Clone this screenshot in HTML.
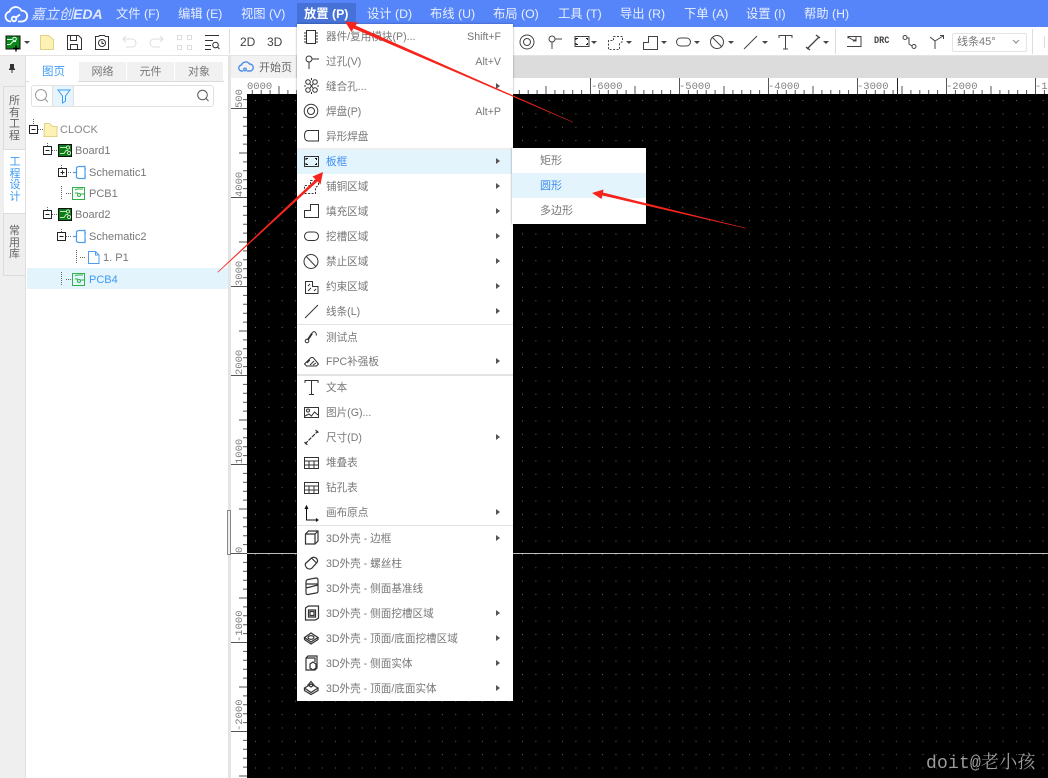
<!DOCTYPE html>
<html lang="zh">
<head>
<meta charset="utf-8">
<title>嘉立创EDA</title>
<style>
html,body{margin:0;padding:0;background:#fff}
#app{position:relative;width:1048px;height:778px;overflow:hidden;background:#fff;font-family:"Liberation Sans","Noto Sans CJK SC",sans-serif;font-size:11px;color:#777}
#app div,#app span,#app svg{position:absolute}
.mb{top:0;height:27px;line-height:28px;font-size:12.3px;color:#e9efff;white-space:nowrap}
.t{white-space:nowrap}
.r{left:297px;width:216px;height:25px;line-height:27px;white-space:nowrap;color:#777;font-size:10.6px}
.r b{position:absolute;left:29px;font-weight:normal}
.r em{position:absolute;right:12px;font-style:normal}
.r.s:after{content:"";position:absolute;left:199px;top:9px;border-left:4px solid #555;border-top:3.5px solid transparent;border-bottom:3.5px solid transparent}
.sep{left:297px;width:216px;height:1px;background:#e3e3e3}
.tab{top:62px;height:19px;line-height:21px;text-align:center;background:#f1f1f1;color:#777;box-sizing:border-box;font-size:11px}
.rail{left:3px;width:22px;text-align:center;box-sizing:border-box;line-height:11.5px;font-size:11px;color:#666}
.tr{height:21px;line-height:23px;white-space:nowrap;color:#777}
</style>
</head>
<body>
<div id="app">
<!-- top bar -->
<div style="left:0;top:0;width:1048px;height:27px;background:#5585f8"></div>
<div style="left:297px;top:3px;width:59px;height:21px;background:#4672d8"></div>
<svg style="left:0;top:0" width="30" height="27" viewBox="0 0 30 27" fill="none" stroke="#fff" stroke-width="1.8"><path d="M11 21.5H10.500A5 5 0 0 1 9.500 11.600A6.500 6.500 0 0 1 21.500 10.600A5.400 5.400 0 0 1 22 21.500H18"/><circle cx="14" cy="19" r="2.300"/><path d="M16 17.500L20 14.500"/></svg>
<div class="t" style="left:31px;top:0;height:27px;line-height:28px;font-size:14px;font-style:italic;color:#dfe8ff">嘉立创<span style="position:static;font-weight:bold">EDA</span></div>
<div class="mb" style="left:116px">文件 (F)</div>
<div class="mb" style="left:178px">编辑 (E)</div>
<div class="mb" style="left:241px">视图 (V)</div>
<div class="mb" style="left:304px;font-weight:bold;color:#fff">放置 (P)</div>
<div class="mb" style="left:367px">设计 (D)</div>
<div class="mb" style="left:430px">布线 (U)</div>
<div class="mb" style="left:493px">布局 (O)</div>
<div class="mb" style="left:558px">工具 (T)</div>
<div class="mb" style="left:620px">导出 (R)</div>
<div class="mb" style="left:684px">下单 (A)</div>
<div class="mb" style="left:746px">设置 (I)</div>
<div class="mb" style="left:804px">帮助 (H)</div>

<!-- toolbar -->
<div style="left:0;top:27px;width:1048px;height:29px;background:#fff;border-bottom:1px solid #e4e4e4;box-sizing:border-box"></div>
<div style="left:0;top:56px;width:1048px;height:22px;background:#dcdcdc"></div>
<div style="left:229px;top:29px;width:1px;height:25px;background:#ddd"></div>
<div style="left:835px;top:29px;width:1px;height:25px;background:#ddd"></div>
<div style="left:1032px;top:29px;width:1px;height:25px;background:#ddd"></div>
<div class="t" style="left:240px;top:34px;font-size:12px;color:#444;line-height:16px">2D</div>
<div class="t" style="left:267px;top:34px;font-size:12px;color:#444;line-height:16px">3D</div>
<div class="t" style="left:874px;top:35px;font:bold 10px/14px 'Liberation Mono',monospace;color:#444;transform:scaleX(.85);transform-origin:left">DRC</div>
<div style="left:952px;top:33px;width:75px;height:19px;border:1px solid #e4e4e4;box-sizing:border-box;border-radius:2px;line-height:17px;padding-left:4px;font-size:11px;color:#777;white-space:nowrap">
<span style="position:static">线条45°</span></div>
<svg style="left:0;top:27px" width="1048" height="29" viewBox="0 27 1048 29" fill="none" stroke="#444" stroke-width="1">
<rect x="6" y="36" width="14" height="13" fill="#0b8a1a" stroke="#111"/>
<path d="M7 39.500h5M7 44.500h3l3-3h3" stroke="#dfe" stroke-width="1"/><circle cx="14.500" cy="39" r="1.800" stroke="#dfe"/>
<path d="M13 48.500h6M16 45.500v6" stroke="#000" stroke-width="1.400"/>
<path d="M24 41h6l-3 3z" fill="#444" stroke="none"/>
<path d="M40.500 35.500h8l5 4v10h-13z" fill="#fdf1b4" stroke="#e2d288"/>
<path d="M67.500 35.500h11l3 3v11h-14zM70.500 35.500v5h6v-5M70.500 49.500v-5h7v5" stroke="#333"/>
<path d="M95.500 36.500h3l1-1h5l1 1h3v13h-13z" stroke="#333"/><circle cx="102" cy="43" r="3.500" stroke="#333"/><path d="M102 41v2.500h2" stroke="#333"/>
<path d="M126 36l-3 3 3 3M123 39h9a3.800 3.800 0 0 1 0 8h-6" stroke="#ddd"/>
<path d="M160 36l3 3-3 3M163 39h-9a3.800 3.800 0 0 0 0 8h6" stroke="#ddd"/>
<path d="M177.500 35.500h4v4h-4zM187.500 35.500h4v4h-4zM177.500 45.500h4v4h-4zM187.500 45.500h4v4h-4z" stroke="#ddd"/>
<path d="M205 35.500h14M205 40.500h8M205 45.500h6M205 49.500h6" stroke="#333"/><circle cx="215.500" cy="45" r="2.800" stroke="#333"/><path d="M217.500 47l2 2" stroke="#333"/>
<circle cx="527" cy="42" r="7"/><circle cx="527" cy="42" r="3.500"/>
<circle cx="552" cy="39" r="3"/><path d="M555 39h7M552 42v7"/>
<rect x="575" y="36.500" width="14" height="10"/><path d="M576 38.500h2M576 38v2M586 38.500h2M587.500 38v2M576 44.500h2M576 43v2M586 44.500h2M587.500 43v2" stroke="#222"/>
<path d="M591 41h6l-3 3z" fill="#444" stroke="none"/>
<path d="M613.500 36.500h9v5l-3 2v6h-11v-9h5z" stroke-dasharray="2 1.500"/><path d="M626 41h6l-3 3z" fill="#444" stroke="none"/>
<path d="M643.500 49.500v-7h5v-6h9v13z"/><path d="M661 41h6l-3 3z" fill="#444" stroke="none"/>
<rect x="676.500" y="38" width="14" height="8" rx="4"/><path d="M694 41h6l-3 3z" fill="#444" stroke="none"/>
<circle cx="717" cy="42" r="6.500"/><path d="M712.500 37.500l9 9"/><path d="M728 41h6l-3 3z" fill="#444" stroke="none"/>
<path d="M744 49l13-13"/><path d="M762 41h6l-3 3z" fill="#444" stroke="none"/>
<path d="M779 38v-2.500h13v2.500M785.500 35.500v13.500M783 49h5"/>
<path d="M807 49l12-12M806 47l4 3M816 35l4 3" stroke-width="1.300"/><path d="M823 41h6l-3 3z" fill="#444" stroke="none"/>
<path d="M848 38.500v-2h13v10h-14M848 37l5 3h3M856 37v4h-3"/>
<circle cx="905" cy="37.500" r="2"/><circle cx="914" cy="46.500" r="2"/><path d="M907 38h2v6l3 2"/>
<path d="M930 37l5 4v8M935 41l8-5M940 35.500h3.500v3.500"/>
<path d="M1013 40l3 3 3-3" stroke="#888"/>
<path d="M1044.500 36v12" stroke="#ddd"/>
</svg>

<!-- canvas + rulers -->
<svg style="left:231px;top:56px" width="817" height="722" viewBox="231 56 817 722">
<defs>
<pattern id="hr" patternUnits="userSpaceOnUse" x="234" y="78" width="89" height="16">
<path d="M.5 0v16M9.400 12v4M18.300 12v4M27.200 12v4M36.100 12v4M45 8v8M53.900 12v4M62.800 12v4M71.700 12v4M80.600 12v4" stroke="#555" fill="none"/>
</pattern>
<pattern id="vr" patternUnits="userSpaceOnUse" x="231" y="108" width="16" height="89">
<path d="M0 .5h16M12 9.400h4M12 18.300h4M12 27.200h4M12 36.100h4M8 45h8M12 53.900h4M12 62.800h4M12 71.700h4M12 80.600h4" stroke="#555" fill="none"/>
</pattern>
<pattern id="dots" patternUnits="userSpaceOnUse" x="255" y="100" width="13.350" height="13.350">
<rect width="1" height="1" fill="#666"/>
</pattern>
</defs>
<rect x="231" y="78" width="817" height="16" fill="#fff"/>
<rect x="231" y="78" width="16" height="700" fill="#fff"/>
<rect x="247" y="78" width="801" height="16" fill="url(#hr)"/>
<rect x="231" y="94" width="16" height="684" fill="url(#vr)"/>
<rect x="247" y="94" width="801" height="684" fill="#000"/>
<rect x="247" y="94" width="801" height="684" fill="url(#dots)"/>
<rect x="247" y="553" width="801" height="1" fill="#bdbdbd"/>
<rect x="897" y="78" width="1" height="17" fill="#222"/>
<g font-family="Liberation Mono,monospace" font-size="10.500" fill="#808080">
<text x="247" y="89">0000</text>
<text x="591" y="89">-6000</text>
<text x="679" y="89">-5000</text>
<text x="768" y="89">-4000</text>
<text x="857" y="89">-3000</text>
<text x="946" y="89">-2000</text>
<text x="1035" y="89">-1000</text>
<text transform="translate(242 108) rotate(-90)" x="0" y="0">500</text>
<text transform="translate(242 197) rotate(-90)" x="0" y="0">4000</text>
<text transform="translate(242 286) rotate(-90)" x="0" y="0">3000</text>
<text transform="translate(242 375) rotate(-90)" x="0" y="0">2000</text>
<text transform="translate(242 464) rotate(-90)" x="0" y="0">1000</text>
<text transform="translate(242 553) rotate(-90)" x="0" y="0">0</text>
<text transform="translate(242 642) rotate(-90)" x="0" y="0">-1000</text>
<text transform="translate(242 731) rotate(-90)" x="0" y="0">-2000</text>
</g>
</svg>
<!-- doc tab -->
<div style="left:231px;top:56px;width:65px;height:22px;background:#f2f2f2"></div>
<svg style="left:238px;top:59px" width="16" height="14" viewBox="0 0 16 14" fill="none" stroke="#4d8fe8" stroke-width="1.400"><path d="M5 12H4A3 3 0 0 1 3.500 6A4.500 4.500 0 0 1 11.500 5A3.300 3.300 0 0 1 12 12H9"/><circle cx="7" cy="10.500" r="1.300"/></svg>
<div class="t" style="left:259px;top:60px;line-height:16px;color:#666">开始页</div>

<!-- left rail -->
<div style="left:0;top:56px;width:25px;height:722px;background:#efefef"></div>
<svg style="left:8px;top:63px" width="8" height="11" viewBox="0 0 8 11"><path d="M2 1h4v4l1 1v1H1V6l1-1zM3.500 7h1v3h-1z" fill="#333"/></svg>
<div class="rail" style="top:86px;height:64px;padding-top:9px;background:#efefef;border:1px solid #dcdcdc;border-right:0">所<br>有<br>工<br>程</div>
<div class="rail" style="top:150px;height:63px;padding-top:7px;background:#fff;color:#3d9bf5;left:4px;width:22px">工<br>程<br>设<br>计</div>
<div class="rail" style="top:213px;height:63px;padding-top:12px;background:#efefef;border:1px solid #dcdcdc;border-right:0">常<br>用<br>库</div>

<!-- left panel -->
<div style="left:25px;top:56px;width:1px;height:722px;background:#dfdfdf"></div>
<div style="left:26px;top:56px;width:202px;height:722px;background:#fff"></div>
<div style="left:228px;top:56px;width:3px;height:722px;background:#e4e4e4"></div>
<div style="left:227px;top:510px;width:4px;height:45px;border:1px solid #888;box-sizing:border-box;background:#eee"></div>
<div class="tab" style="left:29px;top:61px;height:21px;line-height:23px;width:49px;background:#fff;color:#3d9bf5;font-size:11.500px">图页</div>
<div class="tab" style="left:79px;width:47px">网络</div>
<div class="tab" style="left:127px;width:47px">元件</div>
<div class="tab" style="left:175px;width:48px">对象</div>
<div style="left:26px;top:81px;width:3px;height:1px;background:#ddd"></div>
<div style="left:78px;top:81px;width:146px;height:1px;background:#ddd"></div>
<div style="left:31px;top:85px;width:183px;height:22px;border:1px solid #e0e0e0;border-radius:3px;box-sizing:border-box"></div>
<div style="left:52px;top:86px;width:22px;height:20px;background:#e6f5fd;border-left:1px solid #e0e0e0;border-right:1px solid #e0e0e0;box-sizing:border-box"></div>
<svg style="left:31px;top:85px" width="183" height="22" viewBox="0 0 183 22" fill="none"><circle cx="10" cy="10" r="5.500" stroke="#999"/><path d="M14 14l3 3" stroke="#999"/><path d="M27 5h12l-4.500 6v5l-3 2v-7z" stroke="#3d9bf5"/><circle cx="171.500" cy="10" r="4.800" stroke="#555"/><path d="M175 13.500l2.500 2.500" stroke="#555"/></svg>
<div style="left:27px;top:268px;width:201px;height:21px;background:#e4f4fd"></div>

<svg style="left:26px;top:118px" width="120" height="172" viewBox="26 118 120 172" fill="none">
<g stroke="#666" stroke-dasharray="1 1">
<path d="M33.500 119v6M47.500 143v6M47.500 207v6M61.500 165v4M61.500 229v4M61.500 186v14M61.500 272v14M76.500 250v14"/>
<path d="M38 129.500h5M52 150.500h5M66 172.500h5M66 193.500h5M52 214.500h5M66 236.500h5M80 257.500h6M66 279.500h5"/>
</g>
<g stroke="#222" fill="#fff">
<rect x="29.500" y="125.500" width="8" height="8"/><rect x="43.500" y="146.500" width="8" height="8"/><rect x="58.500" y="168.500" width="8" height="8"/><rect x="43.500" y="210.500" width="8" height="8"/><rect x="57.500" y="232.500" width="8" height="8"/>
<path d="M31.500 129.500h4M45.500 150.500h4M60.500 172.500h4M62.500 170.500v4M45.500 214.500h4M59.500 236.500h4"/>
</g>
<path d="M44.500 123.500h5l3 3h4.500v10h-13z" fill="#fdf1b4" stroke="#e2d288" stroke-width="1"/>
<g stroke="#bde8b8">
<rect x="58.500" y="144.500" width="13" height="12" fill="#0b7a17" stroke="#111"/><path d="M60 147.500h6M60 153.500h4l2-3h2"/><circle cx="68" cy="147.500" r="1.600"/><circle cx="69" cy="153" r="1.600"/>
<rect x="58.500" y="208.500" width="13" height="12" fill="#0b7a17" stroke="#111"/><path d="M60 211.500h6M60 217.500h4l2-3h2"/><circle cx="68" cy="211.500" r="1.600"/><circle cx="69" cy="217" r="1.600"/>
</g>
<g stroke="#4d9cf0" stroke-width="1.200"><path d="M73 172.500h3.500v-5l2-1h6.500v12h-6.500l-2-1v-5M85 169h1M85 176h1"/><path d="M73 236.500h3.500v-5l2-1h6.500v12h-6.500l-2-1v-5M85 233h1M85 240h1"/></g>
<path d="M88.500 251.500h7l3.500 3.500v8.500h-10.500zM95.500 251.500v3.500h3.500" stroke="#4d9cf0"/>
<g stroke="#2fb24a"><path d="M72.500 187.500h12v12h-12zM75 193h3M80 194h4M75 190q1-1 3-1h5"/><circle cx="79" cy="195" r="1.500"/><path d="M72.500 273.500h12v12h-12zM75 279h3M80 280h4M75 276q1-1 3-1h5"/><circle cx="79" cy="281" r="1.500"/></g>
</svg>
<div class="tr" style="left:60px;top:119px;color:#888">CLOCK</div>
<div class="tr" style="left:75px;top:140px">Board1</div>
<div class="tr" style="left:89px;top:162px">Schematic1</div>
<div class="tr" style="left:89px;top:183px">PCB1</div>
<div class="tr" style="left:75px;top:204px">Board2</div>
<div class="tr" style="left:89px;top:226px">Schematic2</div>
<div class="tr" style="left:103px;top:247px">1. P1</div>
<div class="tr" style="left:89px;top:269px;color:#3d9bf5">PCB4</div>

<!-- main menu -->
<div style="left:297px;top:24px;width:216px;height:677px;background:#fff;box-shadow:0 0 2px rgba(0,0,0,.4)"></div>
<div style="left:297px;top:149px;width:216px;height:25px;background:#e4f4fd"></div>
<div class="sep" style="top:148px;height:2px;background:#eee"></div>
<div class="sep" style="top:324px"></div>
<div class="sep" style="top:374px;height:2px"></div>
<div class="sep" style="top:525px"></div>
<div class="r" style="top:24px"><b>器件/复用模块(P)...</b><em>Shift+F</em></div>
<div class="r" style="top:49px"><b>过孔(V)</b><em>Alt+V</em></div>
<div class="r s" style="top:74px"><b>缝合孔...</b></div>
<div class="r" style="top:99px"><b>焊盘(P)</b><em>Alt+P</em></div>
<div class="r" style="top:124px"><b>异形焊盘</b></div>
<div class="r s" style="top:149px;color:#3d8ef0"><b>板框</b></div>
<div class="r s" style="top:174px"><b>铺铜区域</b></div>
<div class="r s" style="top:199px"><b>填充区域</b></div>
<div class="r s" style="top:224px"><b>挖槽区域</b></div>
<div class="r s" style="top:249px"><b>禁止区域</b></div>
<div class="r s" style="top:274px"><b>约束区域</b></div>
<div class="r s" style="top:299px"><b>线条(L)</b></div>
<div class="r" style="top:325px"><b>测试点</b></div>
<div class="r s" style="top:349px"><b>FPC补强板</b></div>
<div class="r" style="top:375px"><b>文本</b></div>
<div class="r" style="top:400px"><b>图片(G)...</b></div>
<div class="r s" style="top:425px"><b>尺寸(D)</b></div>
<div class="r" style="top:450px"><b>堆叠表</b></div>
<div class="r" style="top:475px"><b>钻孔表</b></div>
<div class="r s" style="top:500px"><b>画布原点</b></div>
<div class="r s" style="top:526px"><b>3D外壳 - 边框</b></div>
<div class="r" style="top:551px"><b>3D外壳 - 螺丝柱</b></div>
<div class="r" style="top:576px"><b>3D外壳 - 侧面基准线</b></div>
<div class="r s" style="top:601px"><b>3D外壳 - 侧面挖槽区域</b></div>
<div class="r s" style="top:626px"><b>3D外壳 - 顶面/底面挖槽区域</b></div>
<div class="r s" style="top:651px"><b>3D外壳 - 侧面实体</b></div>
<div class="r s" style="top:676px"><b>3D外壳 - 顶面/底面实体</b></div>

<!-- menu icons -->
<svg style="left:297px;top:24px" width="40" height="677" viewBox="297 24 40 677" fill="none" stroke="#333" stroke-width="1">
<path d="M306.500 30.500h9v13h-9zM304 33h2.500M304 36h2.500M304 39h2.500M304 42h2.500M315.500 33h2.500M315.500 36h2.500M315.500 39h2.500M315.500 42h2.500"/>
<circle cx="309" cy="59" r="3"/><path d="M312 59h7M309 62v7"/>
<circle cx="308" cy="82" r="2.300"/><circle cx="315" cy="82" r="2.300"/><circle cx="308" cy="90" r="2.300"/><circle cx="315" cy="90" r="2.300"/><path d="M310 84l3 4M313 84l-3 4M311.500 78v2M311.500 92v2M304 86h2M317 86h2"/>
<circle cx="311" cy="111" r="6.800"/><circle cx="311" cy="111" r="3.500"/>
<path d="M308 130.500h10.500v10.500h-10.500q-3.500 0-3.500-5.200t3.500-5.300z"/>
<rect x="304.500" y="156.500" width="14" height="10"/><path d="M306 158.500h2M306 158v2M315 158.500h2M316.500 158v2M306 164.500h2M306 163v2M315 164.500h2M316.500 163v2" stroke="#111"/>
<path d="M310.500 180.500h8v5l-3 2v6h-11v-8h6z" stroke-dasharray="2 1.500"/>
<path d="M310.500 204.500h8v13h-14v-7h6z"/>
<rect x="304.500" y="232" width="14" height="8.500" rx="4.200"/>
<circle cx="311" cy="261.500" r="7"/><path d="M306.300 256.500l9.500 10"/>
<path d="M305.500 281.500h7v5l5.500 0v7h-12.500zM308 291l3-3M314 291l2-2M308 286l2-2"/>
<path d="M305 318l13-13"/>
<circle cx="307" cy="341" r="1.800"/><path d="M308 339l4-6q2-2.500 3.500-.5t.5 3"/><path d="M308 339.500l4-6" stroke-width="2"/>
<path d="M304.500 364l6-6q1.500-1 3 0l5 6-2 2h-10zM307 363l3-3M310 365l4-4M313 365l3-2"/>
<path d="M305 383v-2.500h13v2.500M311.500 380.500v14M309 394.500h5"/>
<rect x="304.500" y="407.500" width="14" height="10"/><circle cx="308" cy="410.500" r="1.500"/><path d="M305 416l4-2 2.500 2 3-4 3.500 3"/>
<path d="M305 444l13-13M304.500 442l3 3M315.500 430l3 3" stroke-width="1.200" stroke-dasharray="4 1"/>
<rect x="304.500" y="457.500" width="14" height="11"/><path d="M304.500 461h14M304.500 465h14M309 461v7.500M314 461v7.500"/>
<rect x="304.500" y="482.500" width="14" height="11"/><path d="M304.500 486h14M304.500 490h14M309 486v7.500M314 486v7.500"/>
<path d="M306.500 507v13h11" stroke="#111"/><path d="M305 509l1.500-3 1.500 3M316 518.500l2 1.500-2 1.500" fill="#111" stroke="#111"/>
<g stroke-width="1.200">
<path d="M305.500 534l3-3h9.500v10l-3 3h-9.500zM305.500 534h9.500v10M315 534l3-3"/>
<path d="M305.500 563.500l6-5.500q2-1.500 4.500 0 2.500 2 1 4.500l-5.500 6q-2 1-4 0-3-2.500-2-5zM311.500 558l5 5"/>
<path d="M306 582q0-2 2-2.500l8-1.500q2 0 2 2v11q0 2-2 2l-8 1.500q-2 .5-2-2zM306 588l12-3M306 584h12"/>
<path d="M305.500 608l3-2h10v12l-3 2h-10zM308.500 610h7v7h-7z"/><rect x="310" y="611.500" width="4" height="4"/>
<path d="M304.500 637.500l6.500-4.500 7 4.500-7 4.500zM304.500 637.500v2l6.500 4.500 7-4.500v-2"/><ellipse cx="311" cy="637.500" rx="3" ry="1.800"/>
<path d="M306 658l2-2h9v12l-2 2h-9zM306 658h9v4"/><path d="M310 664l3-2 3 2v4l-3 2-3-2z" fill="#fff"/>
<path d="M304.500 688l6.500-4 7 4-7 4.500zM304.500 688v2.500l6.500 4 7-4V688M308 685l3-3.500 3 3.500-3 2z"/>
</g>
</svg>

<!-- submenu -->
<div style="left:512px;top:148px;width:134px;height:76px;background:#fff;box-shadow:0 0 2px rgba(0,0,0,.45)"></div>
<div style="left:512px;top:173px;width:134px;height:25px;background:#e4f4fd"></div>
<div class="t" style="left:540px;top:148px;line-height:27px">矩形</div>
<div class="t" style="left:540px;top:173px;line-height:27px;color:#3d8ef0">圆形</div>
<div class="t" style="left:540px;top:198px;line-height:27px">多边形</div>

<!-- arrows -->
<svg style="left:0;top:0" width="1048" height="778" viewBox="0 0 1048 778">
<g fill="#f5241c">
<path d="M345 21.500L358 22.500L355.500 25.500L573 122L573 122.500L353.500 28.500L351.500 32z"/>
<path d="M323 172L320.500 184.500L317.500 181.500L218 272.500L217.500 272L315.500 179.500L312.500 176.500z"/>
<path d="M592 193L603.500 189.500L603 192.500L746 228L746 228.500L602.500 195.500L601.500 199z"/>
</g>
</svg>

<!-- watermark -->
<div class="t" style="left:926px;top:753px;font:18px/22px 'Liberation Mono','Noto Serif CJK SC',monospace;letter-spacing:.2px;color:#9c9c9c">doit@老小孩</div>
</div>
</body>
</html>
